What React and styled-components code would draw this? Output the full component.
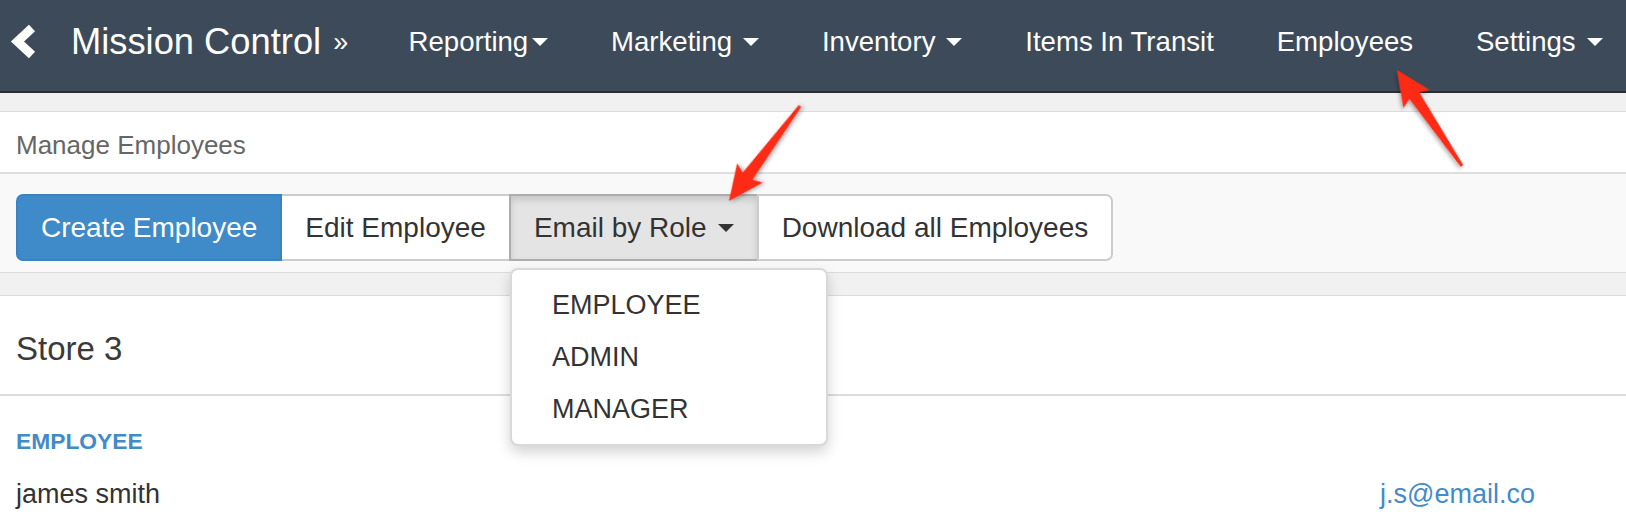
import styled, { createGlobalStyle } from "styled-components";

const blue = "#428bca";

const GlobalStyle = createGlobalStyle`
  html, body {
    margin: 0;
    padding: 0;
    background: #fff;
    font-family: "Liberation Sans", Arial, Helvetica, sans-serif;
    color: #333;
  }
`;

const Page = styled.div`
  position: relative;
  width: 1626px;
  height: 518px;
  overflow: hidden;
`;

const Navbar = styled.nav`
  height: 93px;
  box-sizing: border-box;
  padding: 0 0 8px 8px;
  background: #3d4a59;
  border-bottom: 2px solid #2b2f33;
  display: flex;
  align-items: center;
  color: #fff;
  & > * {
    flex-shrink: 0;
  }
`;

const BackIcon = styled.svg`
  width: 29px;
  height: 35px;
  display: block;
  flex-shrink: 0;
`;

const Brand = styled.div`
  margin-left: 34px;
  font-size: 36.3px;
  white-space: nowrap;
  display: flex;
  align-items: center;
`;

const Raquo = styled.span`
  font-size: 27px;
  margin-left: 12px;
  margin-top: 2px;
`;

const NavList = styled.ul`
  list-style: none;
  margin: 0 0 0 29px;
  padding: 0;
  display: flex;
  align-items: center;
`;

const NavItem = styled.li`
  padding: 0 31.4px;
  font-size: 27.6px;
  white-space: nowrap;
  display: flex;
  align-items: center;
`;

const Caret = styled.span`
  display: inline-block;
  width: 0;
  height: 0;
  margin-left: ${(p) => (p.$tight ? "4px" : "11px")};
  border-top: 8px solid ${(p) => p.$color || "#fff"};
  border-left: 8px solid transparent;
  border-right: 8px solid transparent;
`;

const Strip = styled.div`
  height: ${(p) => p.$h}px;
  background: #f1f1f1;
  border-bottom: 1px solid #dcdcdc;
`;

const TitlePanel = styled.div`
  height: 62px;
  box-sizing: border-box;
  padding: 6px 0 0 16px;
  background: #fff;
  border-bottom: 2px solid #dedede;
  display: flex;
  align-items: center;
  font-size: 26px;
  color: #666;
`;

const Toolbar = styled.div`
  background: #f9f9f9;
  border-bottom: 1px solid #dcdcdc;
  padding: 20px 16px 11px;
  display: flex;
`;

const BtnGroup = styled.div`
  display: flex;
`;

const Dropdown = styled.div`
  position: relative;
  display: flex;
  margin-left: -2px;
`;

const Btn = styled.button`
  height: 67px;
  box-sizing: border-box;
  padding: 0 23px;
  margin-left: ${(p) => (p.$first ? "0" : "-2px")};
  font-family: inherit;
  font-size: 28px;
  color: ${(p) => (p.$primary ? "#fff" : "#333")};
  background: ${(p) => (p.$primary ? "#3f8ac8" : p.$active ? "#e4e4e4" : "#fff")};
  border: 2px solid ${(p) => (p.$primary ? "#3b82c0" : p.$active ? "#adadad" : "#cccccc")};
  box-shadow: ${(p) => (p.$active ? "inset 0 4px 7px rgba(0,0,0,0.13)" : "none")};
  border-radius: ${(p) => (p.$first ? "7px 0 0 7px" : p.$last ? "0 7px 7px 0" : "0")};
  display: flex;
  align-items: center;
  white-space: nowrap;
  position: relative;
  z-index: ${(p) => (p.$primary ? 1 : 0)};
`;

const Menu = styled.ul`
  position: absolute;
  top: calc(100% + 7px);
  left: 1px;
  width: 318px;
  box-sizing: border-box;
  margin: 0;
  padding: 9px 0;
  list-style: none;
  background: #fff;
  border: 2px solid rgba(0, 0, 0, 0.15);
  border-radius: 8px;
  box-shadow: 0 6px 14px rgba(0, 0, 0, 0.18);
  z-index: 5;
`;

const MenuItem = styled.li`
  height: 52px;
  line-height: 52px;
  padding: 0 40px;
  font-size: 27px;
  color: #333;
`;

const StorePanel = styled.div`
  height: 100px;
  box-sizing: border-box;
  padding: 8px 0 0 16px;
  border-bottom: 2px solid #dcdcdc;
  display: flex;
  align-items: center;
  font-size: 33px;
  font-weight: 300;
  color: #3a3a3a;
`;

const Section = styled.div`
  padding: 33px 91px 0 16px;
`;

const RoleLabel = styled.div`
  font-size: 22.8px;
  line-height: 24px;
  font-weight: 700;
  color: ${blue};
`;

const PersonRow = styled.div`
  margin-top: 26px;
  display: flex;
  justify-content: space-between;
  font-size: 27px;
  line-height: 30px;
`;

const Email = styled.a`
  color: ${blue};
  text-decoration: none;
`;

const Overlay = styled.svg`
  position: absolute;
  left: 0;
  top: 0;
  width: 1626px;
  height: 518px;
  pointer-events: none;
  z-index: 10;
`;

function Arrow({ tail, tip }) {
  const dx = tail[0] - tip[0];
  const dy = tail[1] - tip[1];
  const len = Math.hypot(dx, dy);
  const deg = (Math.atan2(dy, dx) * 180) / Math.PI;
  const head = 35;
  const pts = [
    [0, 0],
    [head, -16],
    [head - 4, -6],
    [len, -1.6],
    [len, 1.6],
    [head - 4, 6],
    [head, 16],
  ]
    .map((p) => p.join(","))
    .join(" ");
  return (
    <polygon
      points={pts}
      fill="#fd2b14"
      filter="url(#arrowShadow)"
      transform={`translate(${tip[0]} ${tip[1]}) rotate(${deg})`}
    />
  );
}

const navItems = [
  { label: "Reporting", caret: "tight" },
  { label: "Marketing", caret: "space" },
  { label: "Inventory", caret: "space" },
  { label: "Items In Transit" },
  { label: "Employees" },
  { label: "Settings", caret: "space" },
];

const roles = ["EMPLOYEE", "ADMIN", "MANAGER"];

export default function App() {
  return (
    <Page>
      <GlobalStyle />
      <Navbar>
        <BackIcon viewBox="0 0 29 35">
          <polyline
            points="24,4 9.5,17.5 24,31"
            fill="none"
            stroke="#fff"
            strokeWidth="9"
            strokeLinejoin="miter"
          />
        </BackIcon>
        <Brand>
          Mission Control
          <Raquo>»</Raquo>
        </Brand>
        <NavList>
          {navItems.map((item) => (
            <NavItem key={item.label}>
              {item.label}
              {item.caret && <Caret $tight={item.caret === "tight"} />}
            </NavItem>
          ))}
        </NavList>
      </Navbar>

      <Strip $h={18} />
      <TitlePanel>Manage Employees</TitlePanel>

      <Toolbar>
        <BtnGroup>
          <Btn $primary $first>Create Employee</Btn>
          <Btn>Edit Employee</Btn>
          <Dropdown>
            <Btn $active $first style={{ borderRadius: 0 }}>
              Email by Role
              <Caret $color="#333" />
            </Btn>
            <Menu>
              {roles.map((r) => (
                <MenuItem key={r}>{r}</MenuItem>
              ))}
            </Menu>
          </Dropdown>
          <Btn $last>Download all Employees</Btn>
        </BtnGroup>
      </Toolbar>

      <Strip $h={22} />
      <StorePanel>Store 3</StorePanel>

      <Section>
        <RoleLabel>EMPLOYEE</RoleLabel>
        <PersonRow>
          <span>james smith</span>
          <Email href="#">j.s@email.co</Email>
        </PersonRow>
      </Section>

      <Overlay viewBox="0 0 1626 518">
        <defs>
          <filter id="arrowShadow" x="-20%" y="-20%" width="140%" height="140%">
            <feDropShadow dx="1" dy="2" stdDeviation="2" floodColor="#000" floodOpacity="0.35" />
          </filter>
        </defs>
        <Arrow tail={[800, 106]} tip={[729, 201]} />
        <Arrow tail={[1462, 166]} tip={[1397, 70]} />
      </Overlay>
    </Page>
  );
}
